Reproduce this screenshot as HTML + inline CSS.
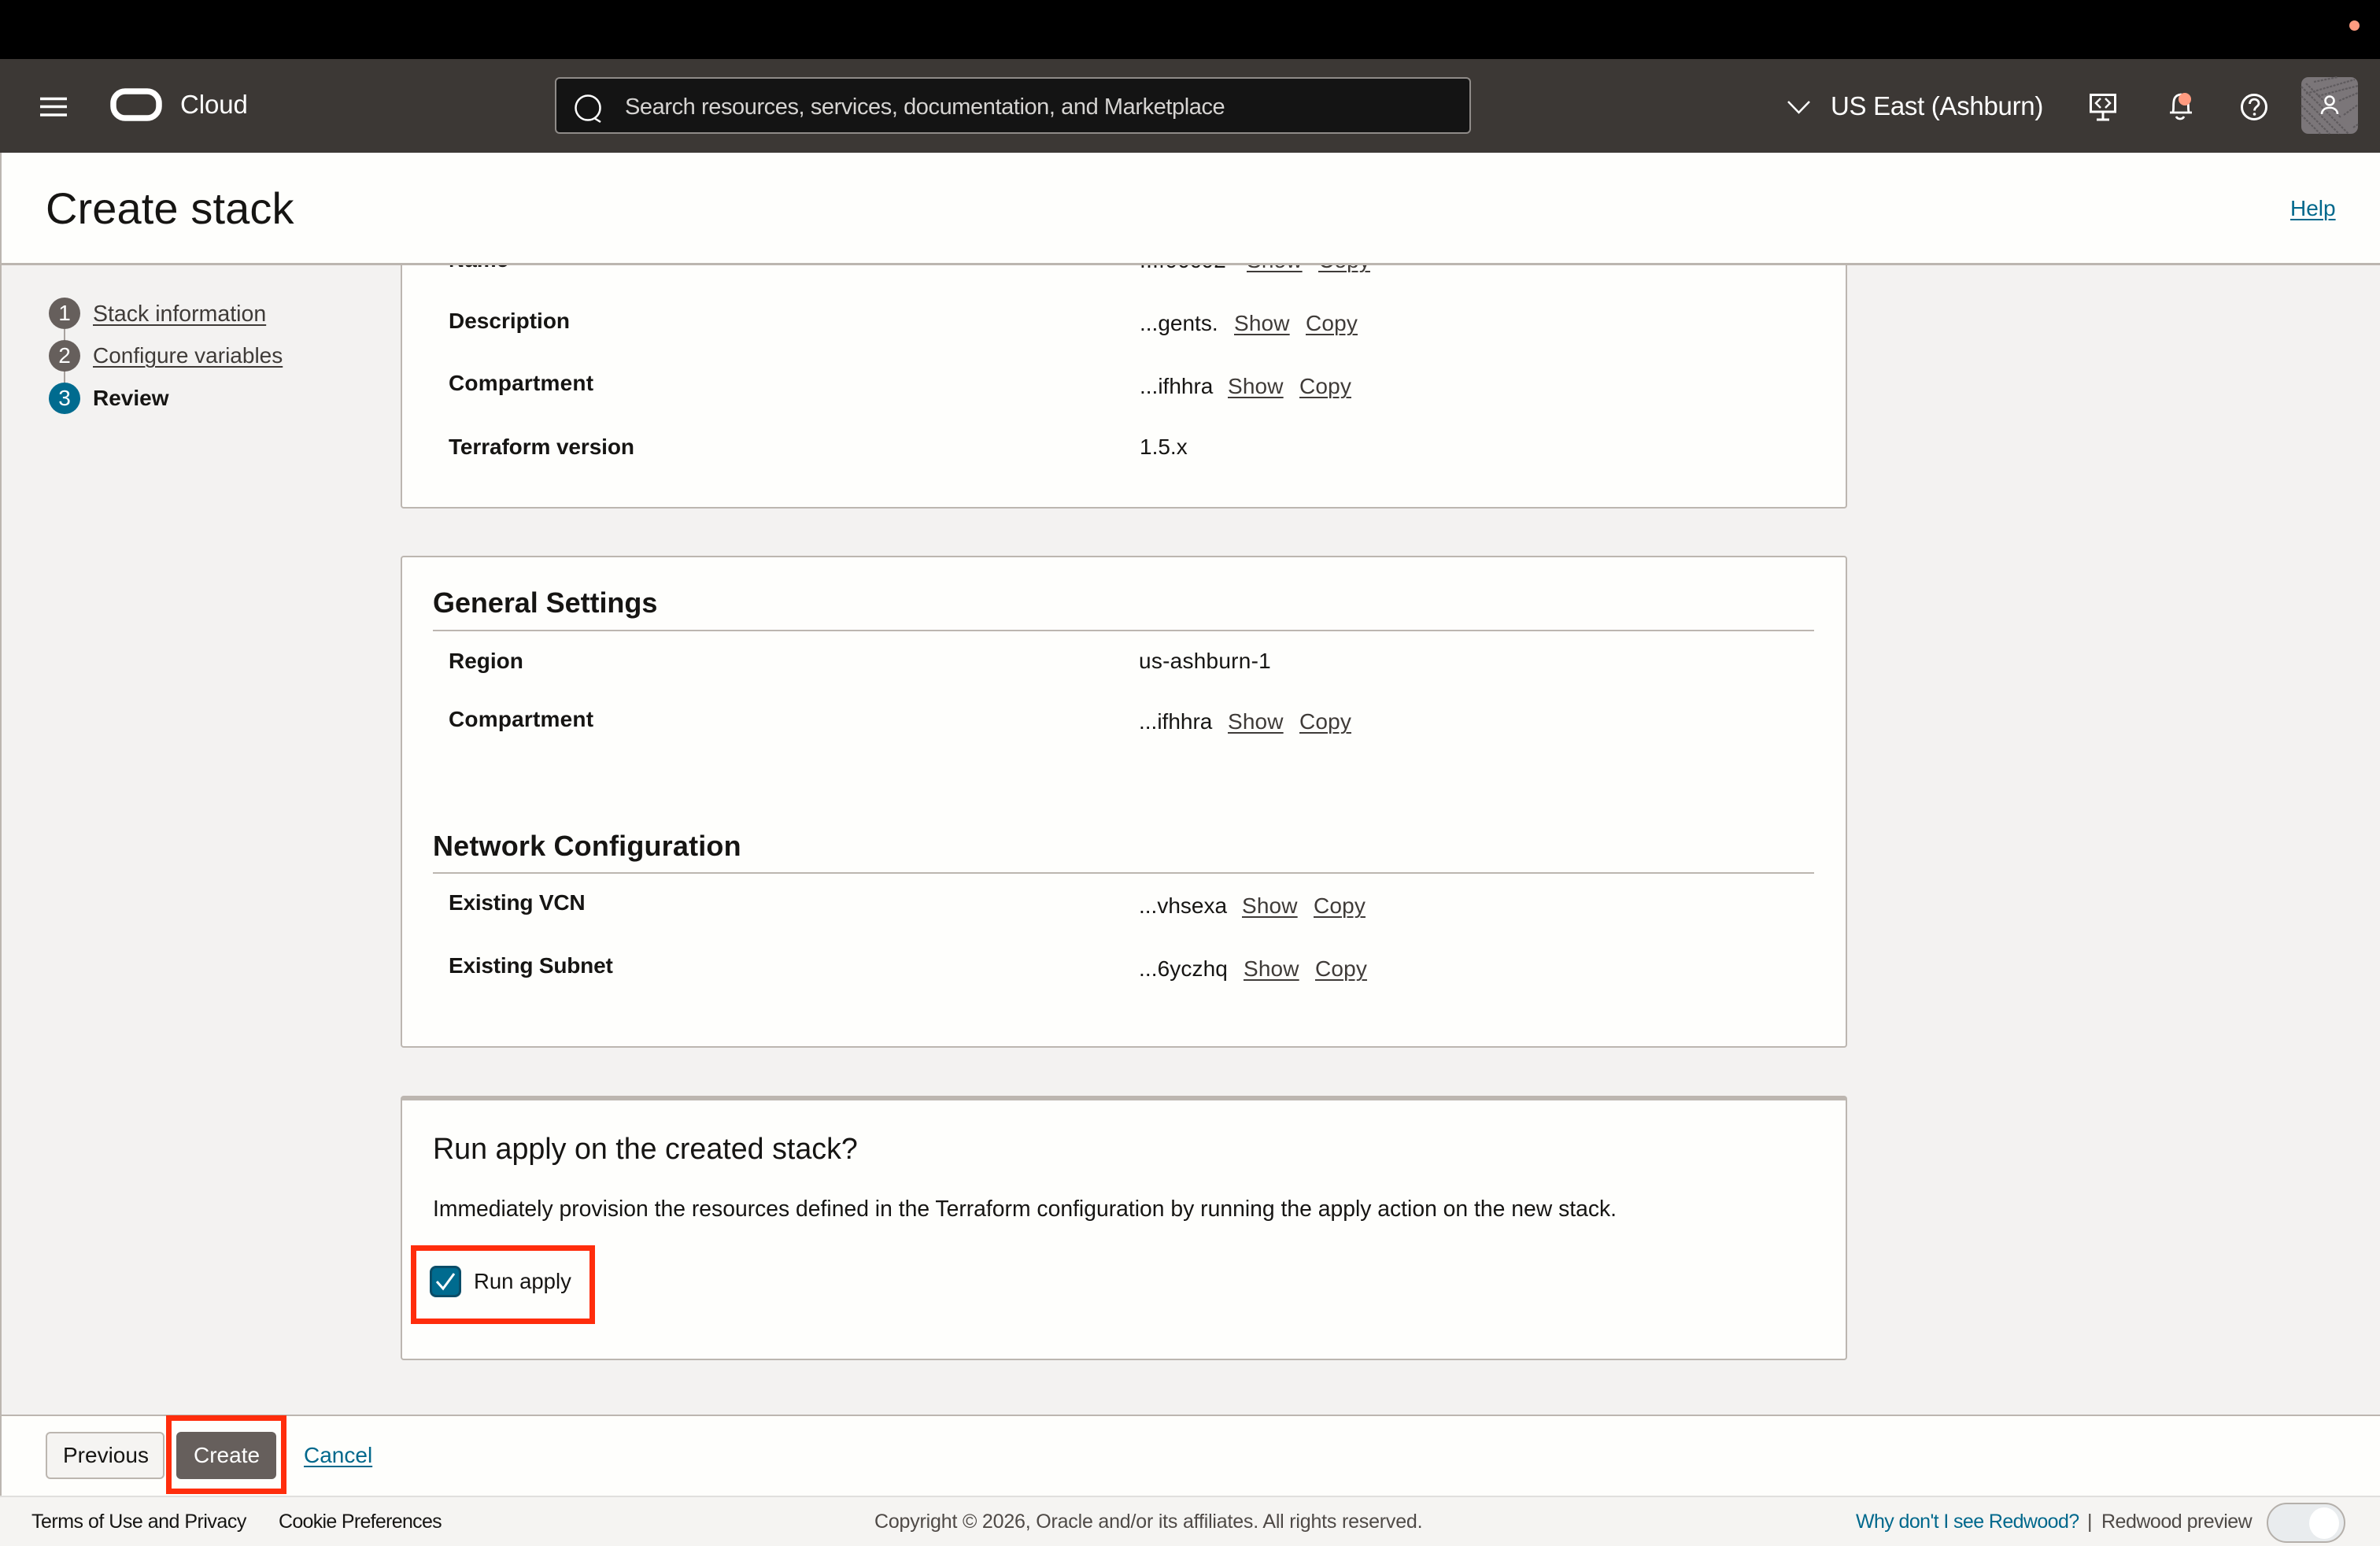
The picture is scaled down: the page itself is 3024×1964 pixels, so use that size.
<!DOCTYPE html>
<html lang="en"><head><meta charset="utf-8"><title>Create stack</title>
<style>
html,body{margin:0;padding:0;width:3024px;height:1964px;overflow:hidden;background:#f3f2f1}
body{position:relative;font-family:"Liberation Sans",Arial,sans-serif;color:#161513}
.b{position:absolute}
.t{position:absolute;white-space:nowrap;font-size:28px;line-height:40px;height:40px}
.s{font-weight:700}
.l{color:#3f3b38;text-decoration:underline;text-decoration-thickness:2px;text-underline-offset:4px;letter-spacing:.15px}
.c{color:#00688c;text-decoration:underline;text-decoration-thickness:2px;text-underline-offset:4px}
.card{position:absolute;left:509px;width:1838px;background:#fefefc;border:2px solid #bcb6b0;border-radius:4px;box-sizing:border-box}
.hr{position:absolute;left:550px;width:1755px;height:2px;background:#bcb6b0}
.stp{position:absolute;left:62px;width:40px;height:40px;border-radius:50%;background:#665f5c;color:#fff;text-align:center;font-size:28px;line-height:40px}
.f{font-size:25px}
</style></head><body>
<div class="b" style="left:0;top:0;width:3024px;height:75px;background:#000"></div>
<div class="b" style="left:2985px;top:26px;width:13px;height:13px;border-radius:50%;background:#ff9b80"></div>
<div class="b" style="left:0;top:75px;width:3024px;height:119px;background:#3c3835"></div>
<div class="b" style="left:705px;top:98px;width:1164px;height:72px;box-sizing:border-box;background:#141414;border:2px solid #8f8b88;border-radius:6px"></div>

<svg class="b" style="left:0;top:75px" width="3024" height="119" viewBox="0 75 3024 119" fill="none">
<path d="M51 125.500H85M51 135.500H85M51 146H85" stroke="#fff" stroke-width="3.500"/>
<rect x="144" y="116" width="58" height="34" rx="15" stroke="#fff" stroke-width="7.500"/>
<circle cx="747" cy="137" r="15.500" stroke="#fff" stroke-width="2.500"/>
<path d="M755 150L763 155" stroke="#fff" stroke-width="2.500"/>
<path d="M2272 129L2285.500 143L2299 129" stroke="#fff" stroke-width="2.500"/>
<path d="M2656.500 120.500H2687.500V142H2656.500Z" stroke="#fff" stroke-width="3"/>
<path d="M2669 125L2663 131L2669 137M2675 125L2681 131L2675 137" stroke="#fff" stroke-width="2.500"/>
<path d="M2672 143V151M2664 152H2680" stroke="#fff" stroke-width="3"/>
<path d="M2757 143H2785M2761 142C2763 136 2758 121 2771 120C2784 121 2779 136 2781 142" stroke="#fff" stroke-width="2.800"/>
<path d="M2765 148C2767 152 2773 152 2775 148" stroke="#fff" stroke-width="2.800"/>
<circle cx="2776" cy="126" r="8" fill="#ff9b80"/>
<circle cx="2864" cy="136" r="15.500" stroke="#fff" stroke-width="3"/>
<path d="M2858.500 132C2858.500 124 2870 124.500 2870 131.500C2870 135.500 2864.500 135.500 2864.500 140.500" stroke="#fff" stroke-width="2.800"/>
<circle cx="2864.500" cy="145" r="1.800" fill="#fff"/>
<rect x="2924" y="98" width="72" height="72" rx="9" fill="#7b7679"/>
<g stroke="#5f5b5e" stroke-width="2.200" stroke-dasharray="3 1.500">
<path d="M2940 104L2970 98M2930 119L2992 101M2945 122L2996 109M2972 128L2996 118M2978 146L2996 133"/>
<path d="M2924 110L2984 170M2924 122L2972 170M2924 134L2960 170M2924 146L2948 170M2930 106L2975 150M2990 162L2996 158"/>
</g>
<circle cx="2960" cy="128" r="5.500" stroke="#fff" stroke-width="2.600"/>
<path d="M2950 145C2950 134 2970 134 2970 145" stroke="#fff" stroke-width="2.600"/>
</svg>
<div class="t" style="left:229px;top:113px;font-size:33px;color:#fff;letter-spacing:-.1px">Cloud</div>
<div class="t" style="left:794px;top:116px;color:#d6d4d2;font-size:29px;letter-spacing:-.42px">Search resources, services, documentation, and Marketplace</div>
<div class="t" style="left:2326px;top:115px;color:#fff;font-size:33px;letter-spacing:-.3px">US East (Ashburn)</div>

<div class="b" style="left:0;top:194px;width:3024px;height:143px;background:#fefefc;border-bottom:3px solid #bcb6b0;box-sizing:border-box"></div>
<div class="b" style="left:0;top:194px;width:2px;height:1706px;background:#bcb6b0"></div>
<div class="t" style="left:58px;top:245px;font-size:56px;color:#161513;letter-spacing:.1px">Create stack</div>
<div class="t c" style="left:2910px;top:245px">Help</div>

<div class="b" style="left:81px;top:418px;width:2px;height:70px;background:#a8a29e"></div>
<div class="stp" style="top:378px">1</div>
<div class="stp" style="top:432px">2</div>
<div class="stp" style="top:486px;background:#006b8f">3</div>
<div class="t l" style="left:118px;top:379px;font-size:28.500px;letter-spacing:0">Stack information</div>
<div class="t l" style="left:118px;top:432px;font-size:28px;letter-spacing:0">Configure variables</div>
<div class="t s" style="left:118px;top:486px;font-size:28px">Review</div>

<div class="b" style="left:0;top:337px;width:3024px;height:1460px;overflow:hidden">
<div class="card" style="top:-60px;height:369px"></div>
<div class="t s" style="left:570px;top:-27px">Name</div>
<div class="t" style="left:1448px;top:-26px;letter-spacing:.3px">...f00c02</div>
<div class="t l" style="left:1584px;top:-26px">Show</div>
<div class="t l" style="left:1675px;top:-26px">Copy</div>
</div>

<div class="t s" style="left:570px;top:388px">Description</div>
<div class="t" style="left:1448px;top:391px">...gents.</div>
<div class="t l" style="left:1568px;top:391px">Show</div>
<div class="t l" style="left:1659px;top:391px">Copy</div>
<div class="t s" style="left:570px;top:467px;letter-spacing:.2px">Compartment</div>
<div class="t" style="left:1448px;top:471px">...ifhhra</div>
<div class="t l" style="left:1560px;top:471px">Show</div>
<div class="t l" style="left:1651px;top:471px">Copy</div>
<div class="t s" style="left:570px;top:548px;letter-spacing:-.1px">Terraform version</div>
<div class="t" style="left:1448px;top:548px">1.5.x</div>

<div class="card" style="top:706px;height:625px"></div>
<div class="t s" style="left:550px;top:746px;font-size:36px;letter-spacing:-.05px">General Settings</div>
<div class="hr" style="top:800px"></div>
<div class="t s" style="left:570px;top:820px">Region</div>
<div class="t" style="left:1447px;top:820px;letter-spacing:.25px">us-ashburn-1</div>
<div class="t s" style="left:570px;top:894px;letter-spacing:.2px">Compartment</div>
<div class="t" style="left:1447px;top:897px">...ifhhra</div>
<div class="t l" style="left:1560px;top:897px">Show</div>
<div class="t l" style="left:1651px;top:897px">Copy</div>
<div class="t s" style="left:550px;top:1055px;font-size:36px;letter-spacing:.18px">Network Configuration</div>
<div class="hr" style="top:1108px"></div>
<div class="t s" style="left:570px;top:1127px;letter-spacing:-.2px">Existing VCN</div>
<div class="t" style="left:1447px;top:1131px">...vhsexa</div>
<div class="t l" style="left:1578px;top:1131px">Show</div>
<div class="t l" style="left:1669px;top:1131px">Copy</div>
<div class="t s" style="left:570px;top:1207px;letter-spacing:-.2px">Existing Subnet</div>
<div class="t" style="left:1447px;top:1211px;letter-spacing:.1px">...6yczhq</div>
<div class="t l" style="left:1580px;top:1211px">Show</div>
<div class="t l" style="left:1671px;top:1211px">Copy</div>

<div class="card" style="top:1392px;height:336px;border-top-width:6px"></div>
<div class="t" style="left:550px;top:1439px;font-size:37.650px">Run apply on the created stack?</div>
<div class="t" style="left:550px;top:1516px;font-size:28.320px">Immediately provision the resources defined in the Terraform configuration by running the apply action on the new stack.</div>
<div class="b" style="left:522px;top:1582px;width:234px;height:100px;box-sizing:border-box;border:7px solid #ff2d0c"></div>
<div class="b" style="left:546px;top:1608px;width:40px;height:40px;box-sizing:border-box;background:#006b8f;border:3px solid #0b4d68;border-radius:8px"></div>
<svg class="b" style="left:546px;top:1608px" width="40" height="40" fill="none"><path d="M9 20L17 29L31 10" stroke="#fff" stroke-width="3"/></svg>
<div class="t" style="left:602px;top:1608px;font-size:27.500px">Run apply</div>

<div class="b" style="left:0;top:1797px;width:3024px;height:103px;background:#fefefc;border-top:2px solid #bcb6b0;box-sizing:border-box"></div>
<div class="b" style="left:0;top:1797px;width:2px;height:103px;background:#bcb6b0"></div>
<div class="b" style="left:58px;top:1819px;width:151px;height:60px;box-sizing:border-box;background:#f5f4f2;border:2px solid #bcb6b0;border-radius:6px"></div>
<div class="t" style="left:80px;top:1829px">Previous</div>
<div class="b" style="left:224px;top:1819px;width:127px;height:60px;background:#665f5c;border-radius:6px"></div>
<div class="t" style="left:246px;top:1829px;color:#fff">Create</div>
<div class="b" style="left:211px;top:1798px;width:153px;height:100px;box-sizing:border-box;border:7px solid #ff2d0c"></div>
<div class="t c" style="left:386px;top:1829px">Cancel</div>

<div class="b" style="left:0;top:1900px;width:3024px;height:64px;background:#f5f4f2;border-top:2px solid #e0dfdd;box-sizing:border-box"></div>
<div class="t f" style="left:40px;top:1913px;letter-spacing:-.5px">Terms of Use and Privacy</div>
<div class="t f" style="left:354px;top:1913px;letter-spacing:-.7px">Cookie Preferences</div>
<div class="t f" style="left:1111px;top:1913px;color:#4f4a47;letter-spacing:-.2px">Copyright © 2026, Oracle and/or its affiliates. All rights reserved.</div>
<div class="t f" style="left:2358px;top:1913px;color:#00688c;letter-spacing:-.6px">Why don't I see Redwood?</div>
<div class="t f" style="left:2652px;top:1913px;color:#4f4a47">|</div>
<div class="t f" style="left:2670px;top:1913px;color:#4f4a47;letter-spacing:-.5px">Redwood preview</div>
<div class="b" style="left:2880px;top:1909px;width:100px;height:51px;box-sizing:border-box;background:#e9ecee;border:2px solid #b5b0ab;border-radius:26px"></div>
<div class="b" style="left:2934px;top:1915px;width:38px;height:40px;background:#fff;border-radius:50%"></div>
</body></html>
